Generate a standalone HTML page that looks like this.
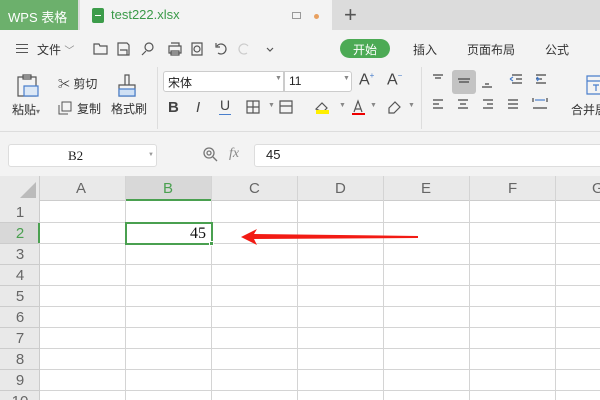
<!DOCTYPE html>
<html style="width:600px;height:400px;overflow:hidden"><head><meta charset="utf-8"><style>
*{margin:0;padding:0;box-sizing:border-box}
body{width:600px;height:400px;overflow:hidden;background:#f3f3f3;font-family:"Liberation Sans","Noto Sans CJK SC",sans-serif;position:relative;color:#333}
.a{position:absolute}
.t{font-size:12px;white-space:nowrap}
svg{position:absolute;overflow:visible}
</style></head><body>
<div class="a" style="left:0;top:0;width:600px;height:30px;background:#dcdcdc"></div>
<div class="a" style="left:0;top:0;width:78px;height:30px;background:#6cb06c"></div>
<div class="a t" style="left:8px;top:7px;color:#fff;font-size:13px">WPS 表格</div>
<div class="a" style="left:80px;top:0;width:252px;height:30px;background:#f3f3f3"></div>
<div class="a" style="left:92px;top:8px;width:12px;height:15px;background:#3c9c4a;border-radius:2px"></div>
<div class="a" style="left:95px;top:15px;width:6px;height:1px;background:#fff"></div>
<div class="a t" style="left:111px;top:7px;color:#3a9a48;font-size:13px">test222.xlsx</div>
<div class="a" style="left:292px;top:12px;width:9px;height:7px;border:1px solid #999"></div>
<div class="a" style="left:314px;top:14px;width:5px;height:5px;border-radius:50%;background:#e8a060"></div>
<div class="a t" style="left:344px;top:2px;font-size:22px;color:#555">+</div>
<div class="a" style="left:16px;top:44px;width:12px;height:1px;background:#555;box-shadow:0 4px 0 #555,0 8px 0 #555"></div>
<div class="a t" style="left:37px;top:41px">文件 <span style="color:#888;font-size:10px">﹀</span></div>
<svg style="left:93px;top:42px" width="180" height="14" fill="none" stroke="#555" stroke-width="1.2">
<path d="M1 2h5l1 2h7v8H1z"/><path d="M25 1h9l2 2v10H25z M27 8h7v5"/>
<circle cx="56" cy="5" r="4"/><path d="M53 9l-4 4"/>
<path d="M76 4h12v7H76z M78 1h8v3 M78 9h8v4h-8z"/><path d="M99 1h10v12H99z"/><circle cx="104" cy="7" r="3"/>
<path d="M124 4a5 5 0 1 1 1 7 M123 1v4h4"/><path d="M155 4a5 5 0 1 0 -1 7" stroke="#ccc"/>
<path d="M174 6l3 3 3-3"/></svg>
<div class="a" style="left:340px;top:39px;width:50px;height:19px;border-radius:10px;background:#4caa55"></div>
<div class="a t" style="left:353px;top:41px;color:#fff">开始</div>
<div class="a t" style="left:413px;top:41px">插入</div>
<div class="a t" style="left:467px;top:41px">页面布局</div>
<div class="a t" style="left:545px;top:41px">公式</div>
<svg style="left:16px;top:74px" width="24" height="24" fill="none" stroke="#555" stroke-width="1.2"><path d="M2 3h18v19H2z M7 1h8v4H7z"/><path d="M8 12h14v10H8z" fill="#dce8f6" stroke="#4a7fcc"/></svg>
<div class="a t" style="left:12px;top:101px">粘贴<span style="font-size:8px;color:#777">▾</span></div>
<div class="a t" style="left:58px;top:75px">✂ 剪切</div>
<svg style="left:58px;top:101px" width="14" height="14" fill="none" stroke="#555"><path d="M4 1h9v9H4z M1 4v9h9"/></svg>
<div class="a t" style="left:77px;top:100px">复制</div>
<svg style="left:116px;top:74px" width="24" height="24" fill="none" stroke="#555" stroke-width="1.2"><path d="M9 1h4v10H9z M3 11h16v11H3z"/><path d="M3 15h16v7H3z" fill="#cfe0f4" stroke="#4a7fcc"/></svg>
<div class="a t" style="left:111px;top:100px">格式刷</div>
<div class="a" style="left:157px;top:67px;width:1px;height:62px;background:#ddd"></div>
<div class="a" style="left:163px;top:71px;width:121px;height:21px;background:#fff;border:1px solid #ccc;border-radius:3px 0 0 3px"></div>
<div class="a t" style="left:168px;top:74px;color:#222">宋体</div>
<div class="a t" style="left:275px;top:75px;font-size:7px;color:#888">▼</div>
<div class="a" style="left:284px;top:71px;width:68px;height:21px;background:#fff;border:1px solid #ccc;border-radius:0 3px 3px 0"></div>
<div class="a t" style="left:289px;top:74px;color:#222">11</div>
<div class="a t" style="left:343px;top:75px;font-size:7px;color:#888">▼</div>
<div class="a t" style="left:359px;top:71px;font-size:16px;color:#444">A<sup style="font-size:8px;color:#4a7fcc">+</sup></div>
<div class="a t" style="left:387px;top:71px;font-size:16px;color:#444">A<sup style="font-size:8px;color:#4a7fcc">−</sup></div>
<div class="a t" style="left:168px;top:99px;font-size:15px;font-weight:bold;color:#444">B</div>
<div class="a t" style="left:196px;top:99px;font-size:15px;font-style:italic;color:#444">I</div>
<div class="a t" style="left:220px;top:97px;font-size:14px;color:#444">U</div>
<div class="a" style="left:219px;top:114px;width:12px;height:1px;background:#4a7fcc"></div>
<svg style="left:246px;top:100px" width="160" height="16" fill="none" stroke="#555" stroke-width="1.2"><path d="M1 1h12v12H1z M7 1v12 M1 7h12"/><path d="M34 1h12v12H34z M34 6h12"/><path d="M70 9l6-6 5 5-4 4z"/><rect x="70" y="10" width="13" height="4" fill="#ffef00" stroke="none"/>
<path d="M108 12l4-11 4 11 M109 9h6"/><rect x="106" y="13" width="13" height="2" fill="#e00" stroke="none"/>
<path d="M143 8l6-6 5 5-6 6h-5z"/></svg>
<div class="a t" style="left:268px;top:102px;font-size:7px;color:#888">▼</div>
<div class="a t" style="left:339px;top:102px;font-size:7px;color:#888">▼</div>
<div class="a t" style="left:370px;top:102px;font-size:7px;color:#888">▼</div>
<div class="a t" style="left:408px;top:102px;font-size:7px;color:#888">▼</div>
<div class="a" style="left:421px;top:67px;width:1px;height:62px;background:#ddd"></div>
<div class="a" style="left:452px;top:70px;width:24px;height:24px;background:#c3c3c3;border-radius:3px"></div>
<svg style="left:432px;top:74px" width="140" height="40" stroke="#444" stroke-width="1.2">
<path d="M1 1h10 M3 4h6"/><path d="M26 5h12 M27 8h10"/><path d="M53 10h4 M50 13h10"/>
<path d="M80 1h10 M84 5h6 M80 9h10"/><path d="M78 5l3-2 M78 5l3 2" stroke="#4a7fcc"/>
<path d="M104 1h10 M104 5h6 M104 9h10"/><path d="M104 5h3l-2-2 M107 5l-2 2" stroke="#4a7fcc"/>
<path d="M1 26h10 M1 30h6 M1 34h10"/><path d="M26 26h10 M28 30h6 M26 34h10"/><path d="M51 26h10 M55 30h6 M51 34h10"/><path d="M76 26h10 M76 30h10 M76 34h10"/><path d="M101 24v4 M115 24v4 M101 34h14"/><path d="M103 26h10" stroke="#4a7fcc"/></svg>
<svg style="left:586px;top:75px" width="20" height="20" fill="none" stroke="#4a7fcc" stroke-width="1.2"><path d="M1 1h18v18H1z M1 6h18 M7 10h6 M10 10v6"/></svg>
<div class="a t" style="left:571px;top:101px">合并居</div>
<div class="a" style="left:0;top:131px;width:600px;height:1px;background:#ddd"></div>
<div class="a" style="left:8px;top:144px;width:149px;height:23px;background:#fff;border:1px solid #ddd;border-radius:3px"></div>
<div class="a t" style="left:68px;top:148px;font-family:'Liberation Serif',serif;font-size:13px;color:#222">B2</div>
<div class="a t" style="left:148px;top:152px;font-size:6px;color:#999">▼</div>
<svg style="left:203px;top:147px" width="16" height="16" fill="none" stroke="#777" stroke-width="1.3"><circle cx="6" cy="6" r="5"/><circle cx="6" cy="6" r="2"/><path d="M10 10l4 4"/></svg>
<div class="a t" style="left:229px;top:146px;font-style:italic;font-size:14px;color:#888;font-family:'Liberation Serif',serif">fx</div>
<div class="a" style="left:254px;top:144px;width:350px;height:23px;background:#fff;border:1px solid #ddd;border-radius:3px"></div>
<div class="a t" style="left:266px;top:147px;font-size:13px;color:#222">45</div>
<div class="a" style="left:0;top:176px;width:600px;height:224px;background:#fff;overflow:hidden">
<div class="a" style="left:0;top:0;width:600px;height:25px;background:#e9e9e9;border-bottom:1px solid #ccc"></div>
<div class="a" style="left:0;top:0;width:40px;height:224px;background:#e9e9e9;border-right:1px solid #ccc"></div>
<div class="a" style="left:126px;top:0;width:86px;height:25px;background:#d8d8d8;border-bottom:2px solid #4aa050"></div>
<div class="a" style="left:0;top:46px;width:40px;height:21px;background:#d8d8d8;border-right:2px solid #4aa050"></div>
<svg style="left:20px;top:6px" width="16" height="16"><path d="M16 0v16H0z" fill="#bbb"/></svg>
<svg style="left:0;top:0" width="600" height="224" stroke="#d4d4d4" stroke-width="1">
<path d="M125.5 0v224 M211.5 0v224 M297.5 0v224 M383.5 0v224 M469.5 0v224 M555.5 0v224"/>
<path d="M40 46.5h560 M40 67.5h560 M40 88.5h560 M40 109.5h560 M40 130.5h560 M40 151.5h560 M40 172.5h560 M40 193.5h560 M40 214.5h560"/>
<path d="M0 46.5h40 M0 67.5h40 M0 88.5h40 M0 109.5h40 M0 130.5h40 M0 151.5h40 M0 172.5h40 M0 193.5h40 M0 214.5h40" stroke="#ccc"/>
</svg>
<div class="a" style="font-size:15px;color:#666;top:4px;left:76px">A</div>
<div class="a" style="font-size:15px;color:#4aa050;top:4px;left:163px">B</div>
<div class="a" style="font-size:15px;color:#666;top:4px;left:249px">C</div>
<div class="a" style="font-size:15px;color:#666;top:4px;left:335px">D</div>
<div class="a" style="font-size:15px;color:#666;top:4px;left:421px">E</div>
<div class="a" style="font-size:15px;color:#666;top:4px;left:508px">F</div>
<div class="a" style="font-size:15px;color:#666;top:4px;left:592px">G</div>
<div class="a" style="left:0;top:26px;width:40px;font-size:15px;line-height:21px;color:#666;text-align:center">1<br><span style="color:#4aa050">2</span><br>3<br>4<br>5<br>6<br>7<br>8<br>9<br>10</div>
<div class="a" style="left:125px;top:46px;width:88px;height:23px;border:2px solid #4aa050"></div>
<div class="a" style="left:209px;top:65px;width:5px;height:5px;background:#4aa050;border:1px solid #fff"></div>
<div class="a t" style="left:190px;top:49px;font-family:'Liberation Serif',serif;font-size:16px;color:#111">45</div>
</div>
<svg style="left:0;top:0" width="600" height="400"><path d="M241 237L257 229L254 234L418 236L418 238L254 239L257 245Z" fill="#f21b14"/></svg>
</body></html>
